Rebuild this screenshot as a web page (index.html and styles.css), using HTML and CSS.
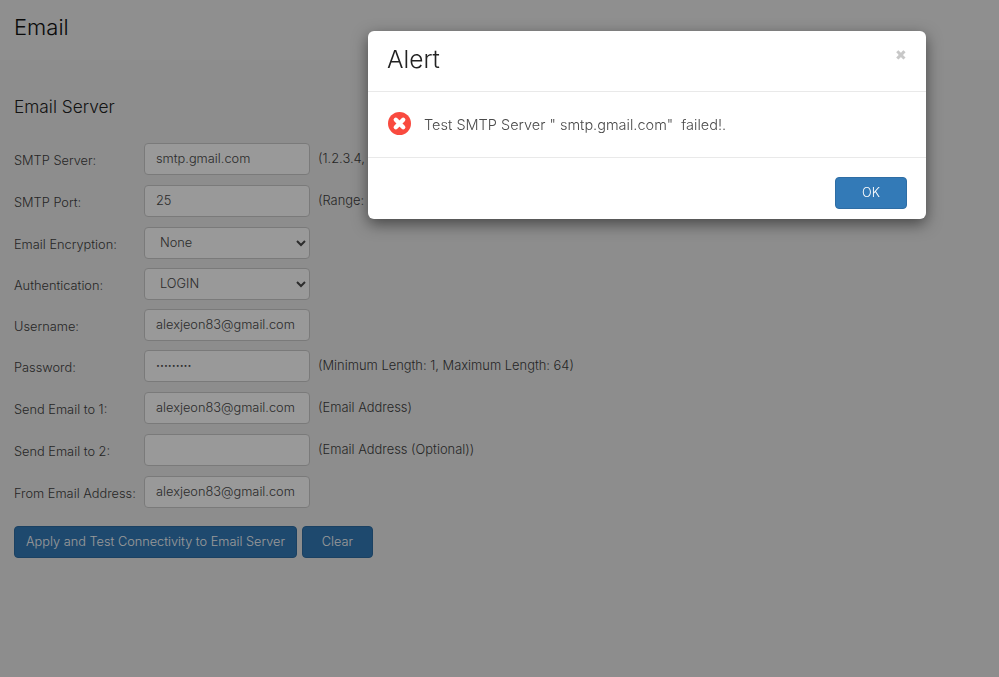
FILE: index.html
```html
<!DOCTYPE html>
<html lang="en">
<head>
    <meta charset="UTF-8">
    <meta name="viewport" content="width=device-width, initial-scale=1.0">
    <title>Email</title>
    <link rel="stylesheet" href="styles.css">
</head>
<body>
    <div class="page-head">
        <h1>Email</h1>
    </div>

    <form class="mail-form">
        <h2>Email Server</h2>

        <div class="row">
            <label for="server">SMTP Server:</label>
            <input type="text" id="server" value="smtp.gmail.com">
            <span class="hint">(1.2.3.4, 2001::1, or smtp.example.com)</span>
        </div>
        <div class="row">
            <label for="port">SMTP Port:</label>
            <input type="text" id="port" value="25">
            <span class="hint">(Range: 1 - 65535, Default: 25)</span>
        </div>
        <div class="row tight">
            <label for="encryption">Email Encryption:</label>
            <select id="encryption">
                <option>None</option>
            </select>
        </div>
        <div class="row tight">
            <label for="auth">Authentication:</label>
            <select id="auth">
                <option>LOGIN</option>
            </select>
        </div>
        <div class="row tight">
            <label for="username">Username:</label>
            <input type="text" id="username" value="alexjeon83@gmail.com">
        </div>
        <div class="row">
            <label for="password">Password:</label>
            <input type="password" id="password" class="secret" value="123456789">
            <span class="hint">(Minimum Length: 1, Maximum Length: 64)</span>
        </div>
        <div class="row">
            <label for="send1">Send Email to 1:</label>
            <input type="text" id="send1" value="alexjeon83@gmail.com">
            <span class="hint">(Email Address)</span>
        </div>
        <div class="row">
            <label for="send2">Send Email to 2:</label>
            <input type="text" id="send2">
            <span class="hint">(Email Address (Optional))</span>
        </div>
        <div class="row">
            <label for="from">From Email Address:</label>
            <input type="text" id="from" value="alexjeon83@gmail.com">
        </div>

        <div class="actions">
            <button type="button" class="btn btn-apply">Apply and Test Connectivity to Email Server</button>
            <button type="button" class="btn btn-clear">Clear</button>
        </div>
    </form>

    <div class="backdrop"></div>

    <div class="modal">
        <div class="modal-head">
            <h3>Alert</h3>
            <span class="close">&#10006;</span>
        </div>
        <div class="modal-body">
            <svg class="err-icon" width="23" height="23" viewBox="0 0 23 23">
                <circle cx="11.5" cy="11.5" r="11.5" fill="#f94a3f"/>
                <path d="M7.8 7.8l7.4 7.4M15.2 7.8l-7.4 7.4" stroke="#fff" stroke-width="4.4" stroke-linecap="round"/>
            </svg>
            <p>Test SMTP Server " smtp.gmail.com"&nbsp; failed!.</p>
        </div>
        <div class="modal-foot">
            <button type="button" class="btn btn-ok">OK</button>
        </div>
    </div>
</body>
</html>
```

FILE: styles.css
```css
body {
    font-family: 'Inter', 'Liberation Sans', sans-serif;
    font-size: 12.9px;
    font-weight: 300;
    background-color: #ececec;
    color: #3f3f3f;
    margin: 0;
    min-height: 677px;
    overflow: hidden;
}

.page-head {
    height: 60px;
    padding: 0 14px;
    background-color: #eeeeee;
}

h1 {
    margin: 0;
    padding-top: 14px;
    font-size: 22px;
    font-weight: 300;
    line-height: 26px;
    color: #111;
}

.mail-form {
    padding: 0 14px;
}

h2 {
    margin: 0;
    padding-top: 36px;
    height: 47px;
    font-size: 17.3px;
    font-weight: 300;
    line-height: 22px;
    color: #222;
}

.row {
    display: flex;
    align-items: center;
    height: 32px;
    margin-bottom: 10px;
}

.row.tight {
    margin-bottom: 9px;
}

label {
    width: 130px;
    flex: none;
    padding-top: 2px;
    font-size: 12.8px;
}

input, select {
    box-sizing: border-box;
    width: 166px;
    height: 32px;
    flex: none;
    margin: 0;
    background-color: #fff;
    color: #4a4a4a;
    border: 1px solid #ccc;
    border-radius: 4px;
    font-family: inherit;
    font-size: 12.8px;
    font-weight: 300;
}

input {
    padding: 0 11px 2px;
}

input.secret {
    font-size: 7px;
}

select {
    padding: 0 0 2px 11px;
}

.hint {
    margin-left: 8px;
    padding-bottom: 2px;
    white-space: nowrap;
}

.actions {
    display: flex;
    gap: 5px;
    margin-top: 18px;
}

.btn {
    height: 32px;
    padding: 0 11px 2px;
    background-color: #337ab7;
    color: #fff;
    border: 1px solid #2e6da4;
    border-radius: 4px;
    font-family: inherit;
    font-size: 12.75px;
    font-weight: 300;
}

.btn-apply {
    width: 283px;
    white-space: nowrap;
}

.btn-clear {
    width: 71px;
}

.backdrop {
    position: fixed;
    top: 0;
    left: 0;
    right: 0;
    bottom: 0;
    background-color: rgba(0, 0, 0, 0.4);
}

.modal {
    position: absolute;
    top: 31px;
    left: 368px;
    width: 558px;
    background-color: #fff;
    border-radius: 6px;
    box-shadow: 0 5px 15px rgba(0, 0, 0, 0.5);
}

.modal-head {
    display: flex;
    justify-content: space-between;
    height: 60px;
    padding: 0 19px;
    border-bottom: 1px solid #e9e9e9;
}

h3 {
    margin: 0;
    padding-top: 13px;
    font-size: 24.5px;
    font-weight: 300;
    line-height: 30px;
    color: #222;
}

.close {
    padding-top: 16px;
    font-size: 14px;
    line-height: 16px;
    color: #c8c8c8;
}

.modal-body {
    display: flex;
    align-items: center;
    gap: 13px;
    height: 65px;
    padding: 0 20px;
    border-bottom: 1px solid #e9e9e9;
}

.err-icon {
    flex: none;
    margin-bottom: 3px;
}

.modal-body p {
    margin: 0 0 1px;
    font-size: 14.5px;
    color: #4a4a4a;
}

.modal-foot {
    display: flex;
    justify-content: flex-end;
    height: 61px;
    padding: 19px 19px 0;
    box-sizing: border-box;
}

.btn-ok {
    width: 72px;
}
```
